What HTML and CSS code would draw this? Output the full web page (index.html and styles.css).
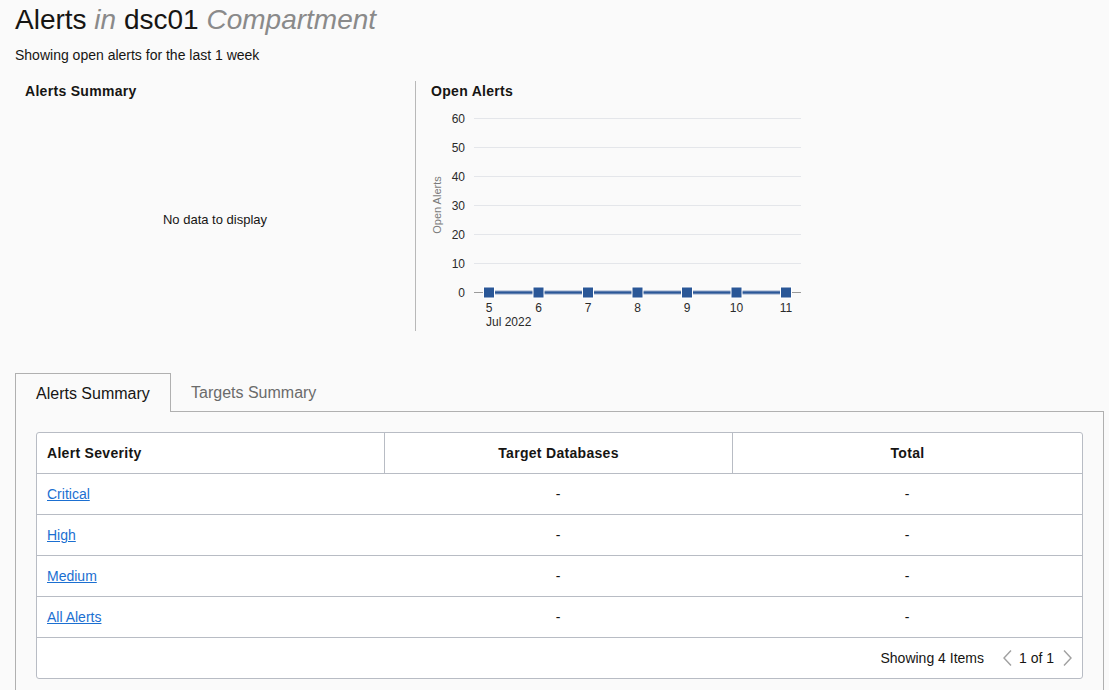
FILE: index.html
```html
<!DOCTYPE html>
<html>
<head>
<meta charset="utf-8">
<link rel="stylesheet" href="styles.css">
</head>
<body>
<div class="page">
  <h1 class="title">Alerts <i class="muted">in</i> dsc01 <i class="muted">Compartment</i></h1>
  <div class="subtitle">Showing open alerts for the last 1 week</div>

  <div class="overview">
    <div class="panel panel-left">
      <div class="panel-title">Alerts Summary</div>
      <div class="nodata">No data to display</div>
    </div>
    <div class="panel panel-right">
      <div class="panel-title">Open Alerts</div>
      <svg class="chart" width="400" height="230" viewBox="0 0 400 230">
        <g stroke="#e4e6ea" stroke-width="1">
          <line x1="59" y1="13.5" x2="386" y2="13.5"/>
          <line x1="59" y1="42.5" x2="386" y2="42.5"/>
          <line x1="59" y1="71.5" x2="386" y2="71.5"/>
          <line x1="59" y1="100.5" x2="386" y2="100.5"/>
          <line x1="59" y1="129.5" x2="386" y2="129.5"/>
          <line x1="59" y1="158.5" x2="386" y2="158.5"/>
        </g>
        <line x1="59" y1="187.5" x2="386" y2="187.5" stroke="#9a9a9a" stroke-width="1"/>
        <g class="ylab" text-anchor="end">
          <text x="50" y="17.5">60</text>
          <text x="50" y="46.5">50</text>
          <text x="50" y="75.5">40</text>
          <text x="50" y="104.5">30</text>
          <text x="50" y="133.5">20</text>
          <text x="50" y="162.5">10</text>
          <text x="50" y="191.5">0</text>
        </g>
        <text class="ytitle" transform="translate(26 100) rotate(-90)" text-anchor="middle">Open Alerts</text>
        <line x1="74" y1="187.5" x2="371" y2="187.5" stroke="#8fa3c4" stroke-width="4"/>
        <line x1="74" y1="187.5" x2="371" y2="187.5" stroke="#2a5797" stroke-width="2"/>
        <g fill="#2a5797" stroke="#ffffff" stroke-width="1">
          <rect x="68.5" y="182" width="11" height="11"/>
          <rect x="118" y="182" width="11" height="11"/>
          <rect x="167.5" y="182" width="11" height="11"/>
          <rect x="217" y="182" width="11" height="11"/>
          <rect x="266.5" y="182" width="11" height="11"/>
          <rect x="316" y="182" width="11" height="11"/>
          <rect x="365.5" y="182" width="11" height="11"/>
        </g>
        <g class="xlab" text-anchor="middle">
          <text x="74" y="207">5</text>
          <text x="123.5" y="207">6</text>
          <text x="173" y="207">7</text>
          <text x="222.5" y="207">8</text>
          <text x="272" y="207">9</text>
          <text x="321.5" y="207">10</text>
          <text x="371" y="207">11</text>
        </g>
        <text class="xlab" x="71" y="221">Jul 2022</text>
      </svg>
    </div>
  </div>

  <div class="tabs">
    <div class="tab active">Alerts Summary</div>
    <div class="tab">Targets Summary</div>
    <div class="tab-fill"></div>
  </div>
  <div class="tab-panel">
    <div class="table">
      <div class="row head">
        <div class="cell c1">Alert Severity</div>
        <div class="cell c2">Target Databases</div>
        <div class="cell c3">Total</div>
      </div>
      <div class="row">
        <div class="cell c1"><a href="#">Critical</a></div>
        <div class="cell c2">-</div>
        <div class="cell c3">-</div>
      </div>
      <div class="row">
        <div class="cell c1"><a href="#">High</a></div>
        <div class="cell c2">-</div>
        <div class="cell c3">-</div>
      </div>
      <div class="row">
        <div class="cell c1"><a href="#">Medium</a></div>
        <div class="cell c2">-</div>
        <div class="cell c3">-</div>
      </div>
      <div class="row">
        <div class="cell c1"><a href="#">All Alerts</a></div>
        <div class="cell c2">-</div>
        <div class="cell c3">-</div>
      </div>
      <div class="footer">
        <span class="count">Showing 4 Items</span>
        <svg class="chev" width="12" height="18" viewBox="0 0 12 18"><path d="M10 1.5 L3 9 L10 16.5" fill="none" stroke="#a0a0a0" stroke-width="1.4"/></svg>
        <span class="pages">1 of 1</span>
        <svg class="chev" width="12" height="18" viewBox="0 0 12 18"><path d="M2 1.5 L9 9 L2 16.5" fill="none" stroke="#a0a0a0" stroke-width="1.4"/></svg>
      </div>
    </div>
  </div>
</div>
</body>
</html>
```

FILE: styles.css
```css
html, body {
  margin: 0;
  padding: 0;
  background: #fafafa;
  font-family: "Liberation Sans", Arial, sans-serif;
  color: #161513;
}
.page {
  padding: 3px 0 0 15px;
  overflow: hidden;
  height: 687px;
}
.title {
  margin: 0;
  font-size: 28px;
  font-weight: normal;
  line-height: 34px;
  color: #161513;
}
.muted {
  color: #8a8a8a;
}
.subtitle {
  font-size: 14px;
  line-height: 16px;
  margin-top: 10px;
  color: #161513;
}
.overview {
  display: flex;
  margin-top: 18px;
  height: 250px;
}
.panel {
  width: 400px;
}
.panel-left {
  display: flex;
  flex-direction: column;
}
.panel-right {
  border-left: 1px solid #b8b8b8;
}
.panel-title {
  font-size: 14px;
  font-weight: bold;
  letter-spacing: 0.3px;
  line-height: 18px;
  padding: 1px 0 0 10px;
}
.panel-right .panel-title {
  padding-left: 15px;
}
.nodata {
  flex: 1;
  display: flex;
  align-items: center;
  justify-content: center;
  font-size: 13px;
  padding-top: 7px;
}
.chart {
  display: block;
  margin-top: 5px;
  margin-left: -1px;
}
.ylab text, .xlab text, text.xlab {
  font-family: "Liberation Sans", Arial, sans-serif;
  font-size: 12px;
  fill: #2a2a2a;
}
.ytitle {
  font-family: "Liberation Sans", Arial, sans-serif;
  font-size: 11px;
  fill: #7a7a7a;
}
.tabs {
  display: flex;
  margin-top: 42px;
  height: 39px;
  margin-right: 5px;
}
.tab {
  font-size: 16px;
  line-height: 39px;
  padding: 0 20px;
  color: #6b6b6b;
  border-bottom: 1px solid #b0b0b0;
}
.tab.active {
  color: #161513;
  border: 1px solid #b0b0b0;
  border-bottom: none;
  line-height: 40px;
  padding: 0 20px;
  width: 114px;
}
.tab-fill {
  flex: 1;
  border-bottom: 1px solid #b0b0b0;
}
.tab-panel {
  margin-right: 5px;
  border-left: 1px solid #b0b0b0;
  border-right: 1px solid #b0b0b0;
  padding: 20px 20px 0 20px;
  height: 300px;
}
.table {
  background: #ffffff;
  border: 1px solid #b8bcc4;
  border-radius: 3px;
}
.row {
  display: flex;
  height: 40px;
  border-bottom: 1px solid #b8bcc4;
}
.cell {
  display: flex;
  align-items: center;
  font-size: 14px;
}
.c1 {
  width: 337px;
  padding-left: 10px;
}
.c2 {
  width: 348px;
  justify-content: center;
}
.c3 {
  flex: 1;
  justify-content: center;
}
.head .cell {
  font-weight: bold;
  letter-spacing: 0.3px;
}
.head .c1, .head .c2 {
  border-right: 1px solid #b8bcc4;
}
.head .c1 {
  width: 337px;
}
.head .c2 {
  width: 347px;
}
.cell a {
  color: #1b6fd1;
  text-decoration: underline;
}
.footer {
  height: 40px;
  display: flex;
  align-items: center;
  justify-content: flex-end;
  font-size: 14px;
  padding-right: 8px;
}
.count {
  margin-right: 17px;
}
.pages {
  margin: 0 8px 0 6px;
}
.chev {
  display: block;
}
```
